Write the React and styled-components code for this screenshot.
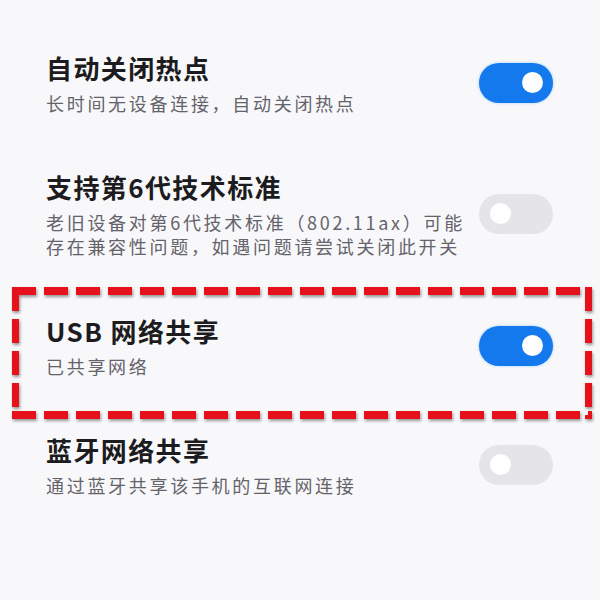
import React from "react"
import styled, { createGlobalStyle } from "styled-components"

const settings = [
  {
    title: "自动关闭热点",
    desc: ["长时间无设备连接，自动关闭热点"],
    on: true,
  },
  {
    title: "支持第6代技术标准",
    desc: [
      "老旧设备对第6代技术标准（802.11ax）可能",
      "存在兼容性问题，如遇问题请尝试关闭此开关",
    ],
    on: false,
  },
  {
    title: "USB 网络共享",
    desc: ["已共享网络"],
    on: true,
    marked: true,
  },
  {
    title: "蓝牙网络共享",
    desc: ["通过蓝牙共享该手机的互联网连接"],
    on: false,
  },
]

const SettingRow = ({ title, desc, on }) => (
  <Row>
    <Text>
      <Title>{title}</Title>
      <Desc>
        {desc.map((line) => (
          <Line key={line}>{line}</Line>
        ))}
      </Desc>
    </Text>
    <Switch $on={on} aria-pressed={on}>
      <Knob />
    </Switch>
  </Row>
)

export default () => (
  <>
    <GlobalStyle />
    <Page>
      {settings.map((item) =>
        item.marked ? (
          <Marked key={item.title}>
            <SettingRow {...item} />
            <DashedFrame />
          </Marked>
        ) : (
          <SettingRow key={item.title} {...item} />
        )
      )}
    </Page>
  </>
)

const GlobalStyle = createGlobalStyle`
  html, body {
    margin: 0;
    background: #f8f8fa;
  }

  body {
    width: 600px;
    height: 600px;
    overflow: hidden;
    font-family: "Noto Sans CJK SC", "Noto Sans", sans-serif;
  }
`

const Page = styled.div`
  display: flex;
  flex-direction: column;
  padding-top: 23px;
`

const Row = styled.div`
  display: flex;
  align-items: center;
  gap: 14px;
  padding: 27px 47px 27px 46px;
`

const Text = styled.div`
  flex: 1;
  min-width: 0;
`

const Title = styled.div`
  font-size: 26px;
  line-height: 36px;
  font-weight: 700;
  letter-spacing: 1.4px;
  color: #1c1c20;
`

const Desc = styled.div`
  margin-top: 5px;
  font-size: 18px;
  line-height: 24px;
  letter-spacing: 2.7px;
  color: #64636b;
`

const Line = styled.span`
  display: block;
  white-space: nowrap;
`

const Switch = styled.button`
  flex: none;
  display: flex;
  align-items: center;
  justify-content: ${(p) => (p.$on ? "flex-end" : "flex-start")};
  width: 74px;
  height: 40px;
  padding: 0 10px 0 11px;
  border: none;
  border-radius: 20px;
  background: ${(p) => (p.$on ? "#1479ec" : "#e5e5e9")};
  box-shadow: ${(p) => (p.$on ? "0 0 3px rgba(40, 150, 255, 0.45)" : "none")};
  cursor: pointer;
`

const Knob = styled.span`
  width: 21px;
  height: 21px;
  border-radius: 50%;
  background: #fff;
`

const Marked = styled.div`
  position: relative;
  margin-top: 1px;
`

const dash = (dir) =>
  `repeating-linear-gradient(${dir}, #e5121b 0 24px, transparent 24px 32px)`

const DashedFrame = styled.div`
  position: absolute;
  top: 1px;
  bottom: -14px;
  left: 12px;
  right: 8px;
  pointer-events: none;
  background:
    ${dash("90deg")} top left / 100% 8px no-repeat,
    ${dash("90deg")} bottom left / 100% 8px no-repeat,
    ${dash("180deg")} top left / 7px 100% no-repeat,
    ${dash("180deg")} top right / 7px 100% no-repeat;
  filter: drop-shadow(1px 2px 1.5px rgba(0, 0, 0, 0.4));
`
